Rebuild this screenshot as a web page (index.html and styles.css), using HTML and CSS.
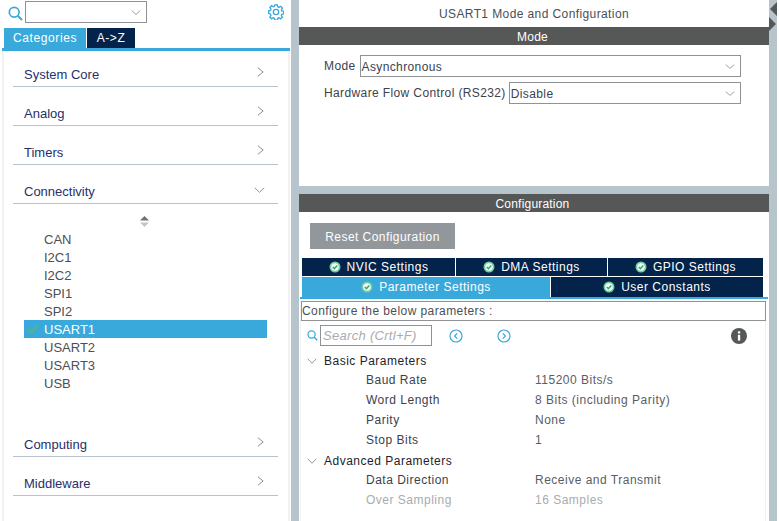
FILE: index.html
```html
<!DOCTYPE html>
<html lang="en">
<head>
<meta charset="utf-8">
<title>USART1 Mode and Configuration</title>
<link rel="stylesheet" href="styles.css">
</head>
<body>
<svg class="defs" width="0" height="0" aria-hidden="true">
  <symbol id="ok" viewBox="0 0 12 12"><circle cx="6" cy="6" r="5.5" fill="#6fcf9f"/><circle cx="6" cy="6" r="3.8" fill="#f2fbf6"/><path d="M3.8 6l1.6 1.6 2.9-3" fill="none" stroke="#35a873" stroke-width="1.5"/></symbol>
  <symbol id="down" viewBox="0 0 14 8" preserveAspectRatio="none"><path d="M1 1l6 6 6-6" fill="none" stroke="#7a7f84" stroke-width="1.1"/></symbol>
  <symbol id="right" viewBox="0 0 8 14" preserveAspectRatio="none"><path d="M1 1l6 6-6 6" fill="none" stroke="#7a7f84" stroke-width="1.1"/></symbol>
  <symbol id="mag" viewBox="0 0 15 15"><circle cx="6.2" cy="6.2" r="4.9" fill="none" stroke="#39a9dc" stroke-width="1.7"/><path d="M9.8 9.8l4.2 4.2" stroke="#39a9dc" stroke-width="2"/></symbol>
</svg>
<div class="app">
  <aside class="left">
    <div class="searchbar">
      <svg class="mag-big"><use href="#mag"/></svg>
      <div class="combo"><svg class="chev"><use href="#down"/></svg></div>
      <svg class="gear" viewBox="0 0 18 18">
        <path d="M7.6 1h2.8l.4 2.2 1.3.6 1.9-1.2 2 2-1.2 1.9.5 1.3 2.2.5v2.8l-2.2.4-.5 1.3 1.2 1.9-2 2-1.9-1.2-1.3.5-.4 2.2H7.6l-.5-2.2-1.3-.5-1.9 1.2-2-2 1.2-1.9-.5-1.3L.5 10.4V7.6l2.1-.5.5-1.3-1.2-1.9 2-2 1.9 1.2 1.3-.6z" transform="translate(.2 0)" fill="none" stroke="#39a9dc" stroke-width="1.5"/>
        <circle cx="9" cy="9" r="3" fill="none" stroke="#39a9dc" stroke-width="1.5"/>
      </svg>
    </div>
    <div class="lefttabs">
      <div class="ltab ltab-on">Categories</div>
      <div class="ltab ltab-off">A-&gt;Z</div>
    </div>
    <div class="catpanel">
      <div class="cat cat-first"><span>System Core</span><svg class="catchev"><use href="#right"/></svg></div>
      <div class="cat"><span>Analog</span><svg class="catchev"><use href="#right"/></svg></div>
      <div class="cat"><span>Timers</span><svg class="catchev"><use href="#right"/></svg></div>
      <div class="cat"><span>Connectivity</span><svg class="catopen"><use href="#down"/></svg></div>
      <div class="sublist">
        <div class="sorter"><svg width="9" height="11" viewBox="0 0 9 11"><path d="M4.5 0L9 4.5H0z" fill="#6f7377"/><path d="M0 6.5h9L4.5 11z" fill="#c4c7ca"/></svg></div>
        <div class="sub">CAN</div>
        <div class="sub">I2C1</div>
        <div class="sub">I2C2</div>
        <div class="sub">SPI1</div>
        <div class="sub">SPI2</div>
        <div class="sub sub-on"><svg class="tick" viewBox="0 0 12 10"><path d="M1 5l3.5 3.5L11 1" fill="none" stroke="#4fb58a" stroke-width="2.2"/></svg>USART1</div>
        <div class="sub">USART2</div>
        <div class="sub">USART3</div>
        <div class="sub">USB</div>
      </div>
      <div class="cat"><span>Computing</span><svg class="catchev"><use href="#right"/></svg></div>
      <div class="cat"><span>Middleware</span><svg class="catchev"><use href="#right"/></svg></div>
    </div>
  </aside>
  <div class="vgutter"></div>
  <main class="right">
    <section class="modepanel">
      <div class="title">USART1 Mode and Configuration</div>
      <div class="band">Mode</div>
      <div class="formrow formrow-first">
        <span class="flabel">Mode</span>
        <div class="select"><span>Asynchronous</span><svg class="selchev"><use href="#down"/></svg></div>
      </div>
      <div class="formrow">
        <span class="flabel">Hardware Flow Control (RS232)</span>
        <div class="select"><span>Disable</span><svg class="selchev"><use href="#down"/></svg></div>
      </div>
    </section>
    <section class="configpanel">
      <div class="band">Configuration</div>
      <div class="resetwrap"><div class="reset">Reset Configuration</div></div>
      <div class="tabs3">
        <div class="ctab"><svg class="ok"><use href="#ok"/></svg>NVIC Settings</div>
        <div class="ctab"><svg class="ok"><use href="#ok"/></svg>DMA Settings</div>
        <div class="ctab"><svg class="ok"><use href="#ok"/></svg>GPIO Settings</div>
      </div>
      <div class="tabs2">
        <div class="ctab ctab-on"><svg class="ok"><use href="#ok"/></svg>Parameter Settings</div>
        <div class="ctab"><svg class="ok"><use href="#ok"/></svg>User Constants</div>
      </div>
      <div class="tabline"></div>
      <div class="configbody">
        <div class="hint">Configure the below parameters :</div>
        <div class="tools">
          <svg class="mag-small"><use href="#mag"/></svg>
          <div class="searchinput">Search (Crtl+F)</div>
          <svg class="nav nav-prev" viewBox="0 0 14 14"><circle cx="7" cy="7" r="6" fill="none" stroke="#39a9dc" stroke-width="1.2"/><path d="M8.2 4.4L5.6 7l2.6 2.6" fill="none" stroke="#39a9dc" stroke-width="1.2"/></svg>
          <svg class="nav nav-next" viewBox="0 0 14 14"><circle cx="7" cy="7" r="6" fill="none" stroke="#39a9dc" stroke-width="1.2"/><path d="M5.8 4.4L8.4 7l-2.6 2.6" fill="none" stroke="#39a9dc" stroke-width="1.2"/></svg>
          <svg class="info" viewBox="0 0 16 16"><circle cx="8" cy="8" r="8" fill="#555857"/><rect x="6.9" y="6.8" width="2.3" height="5.8" fill="#fff"/><rect x="6.9" y="3.3" width="2.3" height="2.2" fill="#fff"/></svg>
        </div>
        <div class="group"><svg class="treechev"><use href="#down"/></svg>Basic Parameters</div>
        <div class="param"><span>Baud Rate</span><span class="val">115200 Bits/s</span></div>
        <div class="param"><span>Word Length</span><span class="val">8 Bits (including Parity)</span></div>
        <div class="param"><span>Parity</span><span class="val">None</span></div>
        <div class="param"><span>Stop Bits</span><span class="val">1</span></div>
        <div class="group"><svg class="treechev"><use href="#down"/></svg>Advanced Parameters</div>
        <div class="param"><span>Data Direction</span><span class="val">Receive and Transmit</span></div>
        <div class="param param-off"><span>Over Sampling</span><span class="val">16 Samples</span></div>
      </div>
    </section>
  </main>
  <div class="vgutter vgutter-right">
    <svg class="split" viewBox="0 0 8 32"><path d="M8 2v14L1 9z" fill="#555857"/><path d="M0 17v14l7-7z" fill="#555857"/></svg>
  </div>
</div>
</body>
</html>
```
FILE: styles.css
```css
* { box-sizing: border-box; }
html, body { margin: 0; padding: 0; height: 100%; background: #fff; }
body { font-family: "Liberation Sans", Arial, sans-serif; font-size: 13px; color: #3c424c; overflow: hidden; }
.defs { display: block; height: 0; }
.app { display: grid; grid-template-columns: 291px 8px 470px 8px; height: 521px; }

/* left column */
.left { display: flex; flex-direction: column; min-width: 0; }
.searchbar { height: 28px; display: flex; align-items: flex-start; padding: 1px 0 0 8px; }
.mag-big { width: 15px; height: 15px; margin: 5px 2px 0 0; }
.combo { width: 122px; height: 22px; border: 1px solid #8f9396; display: flex; justify-content: flex-end; align-items: center; padding-right: 5px; }
.chev { width: 10px; height: 5px; }
.gear { width: 16px; height: 16px; margin: 3px 0 0 121px; }
.lefttabs { height: 20px; display: flex; padding-left: 4px; gap: 1px; color: #fff; font-size: 12px; letter-spacing: .6px; }
.ltab { display: flex; align-items: center; justify-content: center; }
.ltab-on { width: 82px; background: #39a9dc; }
.ltab-off { width: 48px; background: #03234b; }
.catpanel { flex: 1; margin: 0 1px 0 2px; border-top: 3px solid #39a9dc; background: #fff; padding: 0 10px; box-shadow: inset 2px 0 #f2f2f2, inset -2px 0 #f2f2f2; }
.cat { height: 39px; margin: 0 0 0 1px; width: 265px; border-bottom: 1px solid #b8c4cc; display: flex; justify-content: space-between; align-items: flex-end; padding: 0 14px 3px 11px; color: #27306b; line-height: 16px; }
.cat-first { height: 36px; }
.catchev { width: 7px; height: 10px; margin: 0 0 6px 0; }
.catopen { width: 11px; height: 6px; margin: 0 -1px 7px 0; }
.sublist { height: 214px; padding-left: 12px; }
.sorter { height: 26px; display: flex; justify-content: center; align-items: center; padding: 9px 2px 0 0; width: 243px; }
.sub { height: 18px; width: 243px; padding: 1px 0 0 20px; display: flex; align-items: center; color: #4a4f56; }
.sub-on { background: #39a9dc; color: #fff; position: relative; }
.tick { position: absolute; left: 3px; top: 4px; width: 12px; height: 10px; }

/* right column */
.vgutter { background: #b8c4cc; }
.vgutter-right { display: flex; align-items: flex-start; }
.split { width: 8px; height: 32px; }
.right { display: flex; flex-direction: column; min-width: 0; background: #b8c4cc; gap: 8px; }
.modepanel { height: 186px; background: #fff; }
.title { height: 27px; line-height: 27px; padding-top: 1px; text-align: center; font-size: 12px; color: #4a4f56; letter-spacing: .4px; }
.band { height: 18px; line-height: 18px; padding: 1px 3px 0 0; background: #555857; color: #fff; text-align: center; font-size: 12px; letter-spacing: .2px; }
.formrow { height: 22px; margin: 5px 28px 0 25px; display: flex; gap: 3px; font-size: 12px; align-items: stretch; }
.formrow-first { margin-top: 10px; gap: 4px; }
.flabel { line-height: 23px; letter-spacing: .38px; }
.select { flex: 1; border: 1px solid #8f9396; display: flex; justify-content: space-between; align-items: center; padding: 1px 5px 0 1px; letter-spacing: .38px; }
.selchev { width: 10px; height: 5px; }
.configpanel { flex: 1; background: #fff; display: flex; flex-direction: column; font-size: 12px; }
.resetwrap { padding: 11px 0 9px 11px; }
.reset { width: 145px; height: 26px; line-height: 28px; background: #92979c; color: #fff; text-align: center; letter-spacing: .45px; }
.tabs3, .tabs2 { display: grid; gap: 1px; margin: 0 6px 0 3px; }
.tabs3 { grid-template-columns: 153px 151px 1fr; height: 18px; }
.tabs2 { grid-template-columns: 248px 1fr; height: 20px; margin-top: 1px; }
.ctab { background: #03234b; color: #fff; display: flex; align-items: center; justify-content: center; gap: 6px; letter-spacing: .5px; }
.ctab-on { background: #39a9dc; }
.ok { width: 12px; height: 12px; }
.tabline { height: 2px; margin: 0 1px; background: #39a9dc; }
.configbody { flex: 1; margin: 0 3px 0 1px; padding: 2px 0 0 1px; box-shadow: inset 1px 0 #f2f2f2, inset -1px 0 #f2f2f2; }
.hint { height: 20px; line-height: 18px; border: 1px solid #8f9396; padding-left: 0; letter-spacing: .42px; font-size: 12px; color: #4a4f56; }
.tools { height: 29px; display: flex; align-items: center; padding: 4px 0 4px 6px; }
.mag-small { width: 11px; height: 11px; margin-right: 2px; }
.searchinput { width: 112px; height: 21px; line-height: 19px; border: 1px solid #8f9396; padding-left: 2px; color: #a9acaf; font-size: 13px; font-style: italic; letter-spacing: .3px; }
.nav { width: 14px; height: 14px; }
.nav-prev { margin-left: 17px; }
.nav-next { margin-left: 34px; }
.info { width: 16px; height: 16px; margin-left: 220px; }
.group { height: 20px; line-height: 20px; padding-top: 1px; display: flex; align-items: center; padding-left: 6px; color: #1f2328; letter-spacing: .5px; }
.treechev { width: 10px; height: 6px; margin-right: 7px; }
.param { height: 20px; line-height: 21px; display: grid; grid-template-columns: 169px 1fr; padding-left: 65px; color: #3c424c; letter-spacing: .5px; }
.val { color: #5a5e63; }
.param-off, .param-off .val { color: #a9acaf; }
```
